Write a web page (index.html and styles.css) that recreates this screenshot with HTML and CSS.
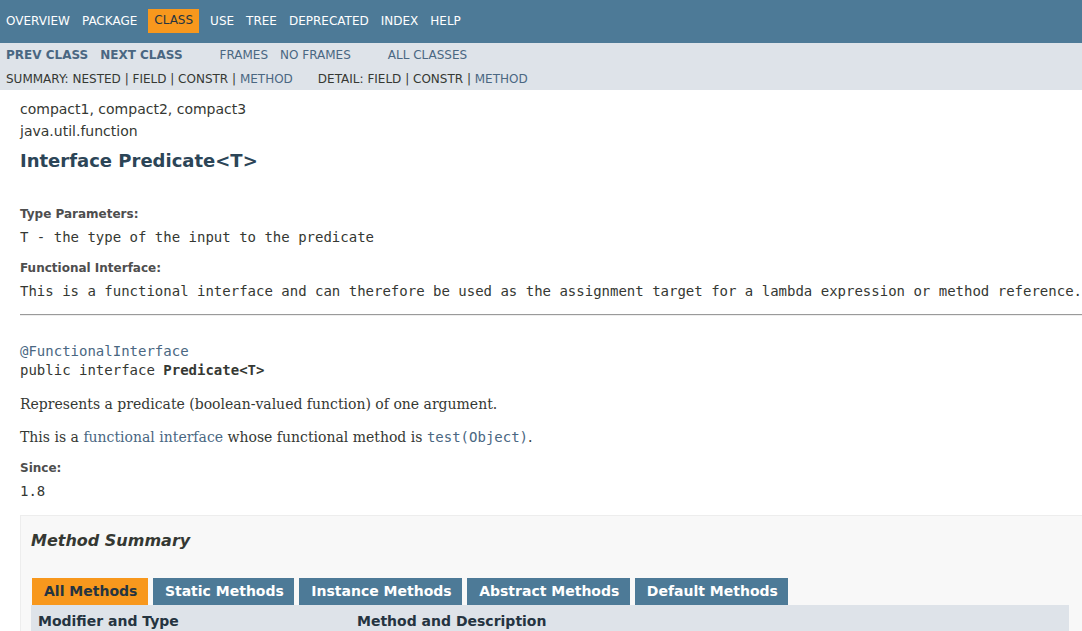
FILE: index.html
```html
<!DOCTYPE html>
<html lang="en">
<head>
  <meta charset="UTF-8">
  <title>Predicate (Java Platform SE 8)</title>
  <link rel="stylesheet" href="styles.css">
</head>
<body>

<div class="page">
  <div class="top-nav">
    <ul class="nav-list">
      <li><a href="#">Overview</a></li>
      <li><a href="#">Package</a></li>
      <li class="nav-current">Class</li>
      <li><a href="#">Use</a></li>
      <li><a href="#">Tree</a></li>
      <li><a href="#">Deprecated</a></li>
      <li><a href="#">Index</a></li>
      <li><a href="#">Help</a></li>
    </ul>
  </div>

  <div class="sub-nav">
    <div class="sub-nav-row">
      <ul class="nav-list">
        <li><a href="#" class="strong-link">Prev Class</a></li>
        <li><a href="#" class="strong-link">Next Class</a></li>
      </ul>
      <ul class="nav-list">
        <li><a href="#">Frames</a></li>
        <li><a href="#">No&nbsp;Frames</a></li>
      </ul>
      <ul class="nav-list">
        <li><a href="#">All&nbsp;Classes</a></li>
      </ul>
    </div>
    <div class="sub-nav-row detail-row">
      <ul class="sub-nav-list">
        <li>Summary:&nbsp;</li>
        <li>Nested&nbsp;|&nbsp;</li>
        <li>Field&nbsp;|&nbsp;</li>
        <li>Constr&nbsp;|&nbsp;</li>
        <li><a href="#">Method</a></li>
      </ul>
      <ul class="sub-nav-list">
        <li>Detail:&nbsp;</li>
        <li>Field&nbsp;|&nbsp;</li>
        <li>Constr&nbsp;|&nbsp;</li>
        <li><a href="#">Method</a></li>
      </ul>
    </div>
  </div>

  <div class="header">
    <div class="sub-title">compact1, compact2, compact3</div>
    <div class="sub-title package-name">java.util.function</div>
    <h2 class="title">Interface Predicate&lt;T&gt;</h2>
  </div>

  <div class="content">
    <dl class="tags">
      <dt>Type Parameters:</dt>
      <dd><code>T</code> - the type of the input to the predicate</dd>
      <dt>Functional Interface:</dt>
      <dd>This is a functional interface and can therefore be used as the assignment target for a lambda expression or method reference.</dd>
    </dl>
    <hr>
    <pre class="signature"><a href="#">@FunctionalInterface</a>
public interface <span class="type-name">Predicate&lt;T&gt;</span></pre>
    <div class="block">Represents a predicate (boolean-valued function) of one argument.</div>
    <div class="block">This is a <a href="#">functional interface</a> whose functional method is <a href="#"><code>test(Object)</code></a>.</div>
    <dl class="tags">
      <dt>Since:</dt>
      <dd>1.8</dd>
    </dl>

    <div class="summary-box">
      <h3>Method Summary</h3>
      <div class="tabs">
        <span class="tab active-tab">All Methods</span>
        <span class="tab">Static Methods</span>
        <span class="tab">Instance Methods</span>
        <span class="tab">Abstract Methods</span>
        <span class="tab">Default Methods</span>
      </div>
      <table class="summary-table">
        <tr>
          <th class="col-first">Modifier and Type</th>
          <th class="col-last">Method and Description</th>
        </tr>
      </table>
    </div>
  </div>
</div>

</body>
</html>
```

FILE: styles.css
```css
html {
  overflow: hidden;
}
body {
  margin: 0;
  background-color: #ffffff;
  color: #353833;
  font-family: 'DejaVu Sans', Arial, Helvetica, sans-serif;
  font-size: 14px;
}
a {
  color: #4a6782;
  text-decoration: none;
}
code, pre {
  font-family: 'DejaVu Sans Mono', monospace;
  font-size: 14px;
}
.page {
  width: 1110px;
}

/* navigation bars */
.top-nav {
  background-color: #4d7a97;
  height: 43px;
  box-sizing: border-box;
  padding-top: 9px;
  font-size: 12px;
}
.nav-list {
  display: flex;
  list-style: none;
  margin: 0 25px 0 0;
  padding: 0;
}
.nav-list li {
  padding: 5px 6px;
  line-height: 14px;
  text-transform: uppercase;
}
.top-nav a {
  color: #ffffff;
}
.top-nav .nav-current {
  background-color: #f8981d;
  color: #253441;
  margin: 0 5px;
  padding: 4px 6px 5px 6px;
}
.sub-nav {
  background-color: #dee3e9;
  font-size: 12px;
}
.sub-nav-row {
  display: flex;
  padding-bottom: 5px;
}
.strong-link {
  font-weight: bold;
}
.detail-row {
  padding: 0 0 4px 6px;
}
.sub-nav-list {
  display: flex;
  list-style: none;
  margin: 0 25px 0 0;
  padding: 0;
  line-height: 14px;
  text-transform: uppercase;
}

/* header */
.header {
  margin: 0 20px;
  padding-top: 9px;
}
.sub-title {
  line-height: 20px;
}
.package-name {
  margin-top: 2px;
}
.title {
  color: #2c4557;
  font-size: 18px;
  line-height: 22px;
  margin: 9px 0 0 0;
}

/* class description */
.content {
  padding: 0 20px;
}
.tags {
  margin: 0;
}
.tags dt {
  color: #4e4e4e;
  font-size: 12px;
  font-weight: bold;
  line-height: 16px;
  margin-top: 13px;
}
.content > .tags:first-child dt:first-child {
  margin-top: 34px;
}
.tags dd {
  margin: 5px 0 0 0;
  font-family: 'DejaVu Sans Mono', monospace;
  line-height: 20px;
  white-space: nowrap;
}
hr {
  margin: 13px 0 0 0;
  height: 0;
  border: none;
  border-top: 1px solid #9a9a9a;
  border-bottom: 1px solid #eeeeee;
}
.signature {
  margin: 26px 0 0 0;
  line-height: 19px;
}
.type-name {
  font-weight: bold;
}
.block {
  font-family: 'DejaVu Serif', Georgia, 'Times New Roman', serif;
  line-height: 20px;
  margin-top: 13px;
}
.signature + .block {
  margin-top: 14px;
}
.block code {
  line-height: 20px;
}

/* method summary */
.summary-box {
  margin-top: 14px;
  border: 1px solid #ededed;
  background-color: #f8f8f8;
  padding: 15px 20px 5px 10px;
}
.summary-box h3 {
  margin: 0;
  font-size: 16px;
  font-style: italic;
  line-height: 20px;
}
.tabs {
  display: flex;
  gap: 5px;
  margin-top: 27px;
  padding-left: 1px;
}
.tab {
  background-color: #4d7a97;
  color: #ffffff;
  font-weight: bold;
  line-height: 16px;
  padding: 5px 10.5px 6px 12px;
  white-space: nowrap;
}
.active-tab {
  background-color: #f8981d;
  color: #253441;
}
.summary-table {
  width: 100%;
  border-collapse: collapse;
}
.summary-table th {
  background-color: #dee3e9;
  color: #253441;
  text-align: left;
  line-height: 16px;
  padding: 8px 3px 3px 7px;
}
.summary-table .col-first {
  width: 319px;
  box-sizing: border-box;
}
```
